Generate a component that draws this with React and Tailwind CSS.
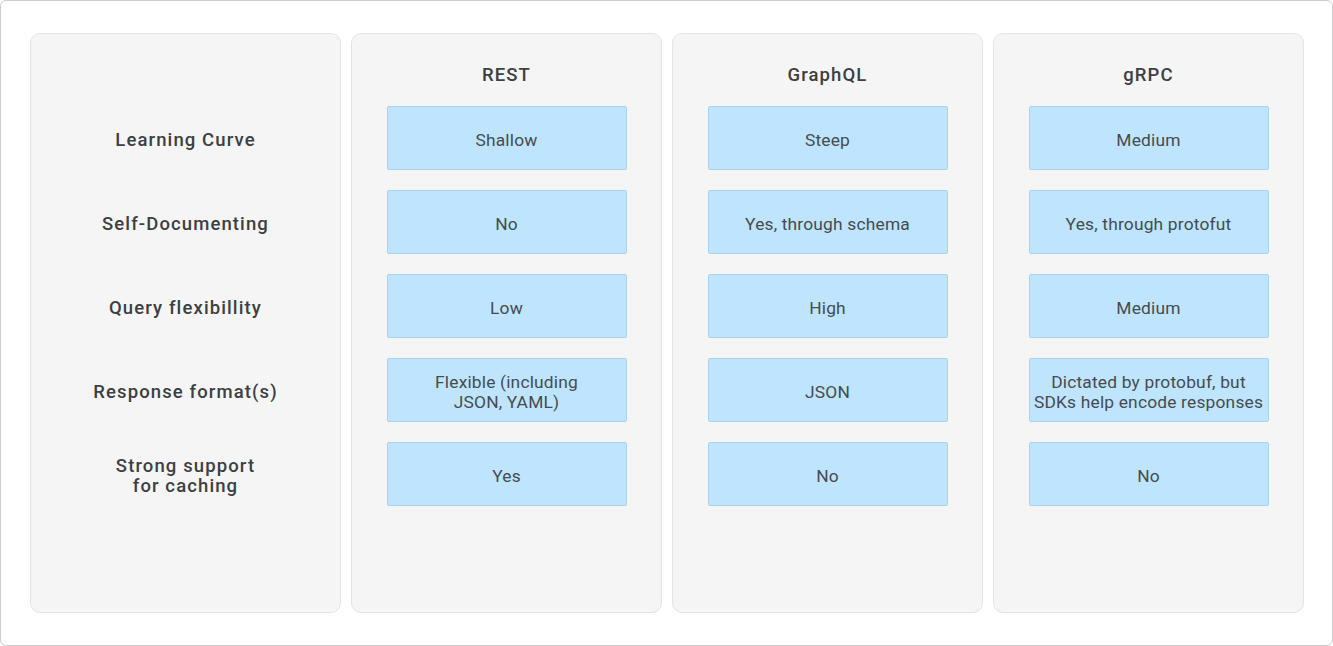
import React from 'react';

const rows = [
  ['Learning Curve'],
  ['Self-Documenting'],
  ['Query flexibillity'],
  ['Response format(s)'],
  ['Strong support', 'for caching'],
];

const columns = [
  {
    title: 'REST',
    values: [['Shallow'], ['No'], ['Low'], ['Flexible (including', 'JSON, YAML)'], ['Yes']],
  },
  {
    title: 'GraphQL',
    values: [['Steep'], ['Yes, through schema'], ['High'], ['JSON'], ['No']],
  },
  {
    title: 'gRPC',
    values: [
      ['Medium'],
      ['Yes, through protofut'],
      ['Medium'],
      ['Dictated by protobuf, but', 'SDKs help encode responses'],
      ['No'],
    ],
  },
];

const Panel = ({ children }) => (
  <div className="w-[311px] h-[580px] rounded-[10px] bg-[#f5f5f5] border border-[#e4e4e4] flex flex-col items-center pt-[28px]">
    {children}
  </div>
);

const Lines = ({ lines }) =>
  lines.map((l, i) => (
    <span key={i} className="block">
      {l}
    </span>
  ));

export default function App() {
  return (
    <div
      className="w-[1333px] h-[646px] bg-white border border-[#cdcdcd] rounded-md pl-[29px] pt-[32px] flex gap-[10px]"
      style={{ fontFamily: 'Roboto, "Liberation Sans", sans-serif' }}
    >
      <Panel>
        <div className="h-[24px] mb-5" />
        <div className="flex flex-col gap-5">
          {rows.map((r, i) => (
            <div
              key={i}
              className="h-[64px] w-[240px] pt-[4px] flex flex-col items-center justify-center text-center text-[18.5px] leading-[20px] font-medium tracking-[0.06em] text-[#3c4043]"
            >
              <Lines lines={r} />
            </div>
          ))}
        </div>
      </Panel>
      {columns.map((col) => (
        <Panel key={col.title}>
          <div className="h-[24px] leading-[24px] pt-px mb-5 text-[18.5px] font-medium tracking-[0.06em] text-[#3c4043]">
            {col.title}
          </div>
          <div className="flex flex-col gap-5">
            {col.values.map((v, i) => (
              <div
                key={i}
                className="h-[64px] w-[240px] pt-[4px] rounded-[2px] bg-[#bee5fd] border border-[#a7d3ef] flex flex-col items-center justify-center text-center text-[17.4px] leading-[20px] tracking-[0.01em] text-[#474b50]"
              >
                <Lines lines={v} />
              </div>
            ))}
          </div>
        </Panel>
      ))}
    </div>
  );
}
